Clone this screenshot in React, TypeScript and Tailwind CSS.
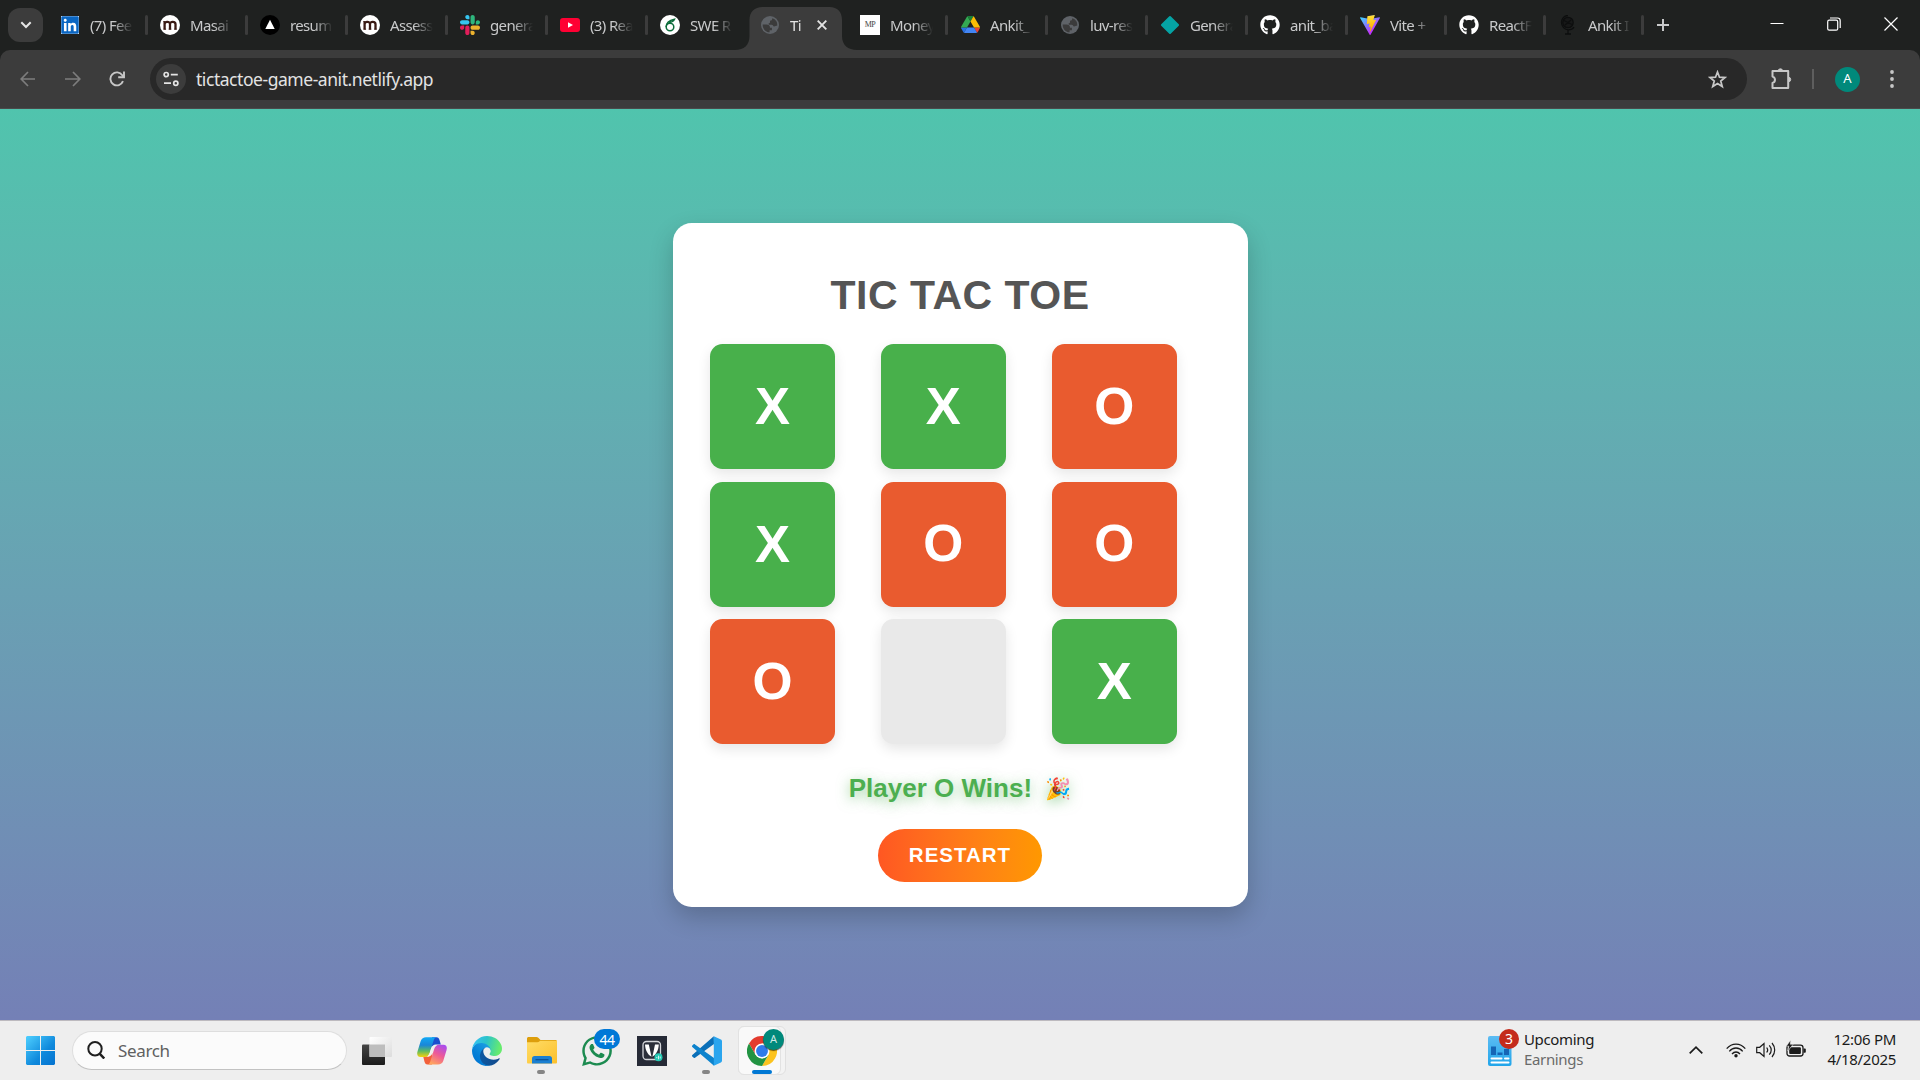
import React from "react";
import { FaGithub, FaLinkedin, FaWhatsapp } from "react-icons/fa";

const UI = "font-['Noto_Sans','Open_Sans',sans-serif]";

function Globe() {
  return (
    <svg viewBox="0 0 18 18" className="h-[18px] w-[18px]">
      <circle cx="9" cy="9" r="9" fill="#5f6368" />
      <path d="M1.700 8.600h3.600c2.400 0 3.700 1 3.700 3.200h1.900v2.500H8.600v2C4.800 16.300 1.700 13 1.700 9z" fill="#3b3b3b" />
      <path d="M11.300 2.300c0 1.700-.8 2.500-2.300 2.500v1.500c0 .6-.6 1-1.300 1v1.500h2.800c1.700 0 1.500 1.700 2.600 1.700 1.200 0 1.700-.7 2.700-.7h.4c.5-3.500-1.500-6.500-4.900-7.500z" fill="#3b3b3b" />
    </svg>
  );
}

function MasaiIcon() {
  return (
    <div className="flex h-5 w-5 items-center justify-center rounded-full bg-white">
      <svg viewBox="0 0 20 20" className="h-5 w-5" fill="none" stroke="#3a1a14" strokeWidth="2.300">
        <path d="M4.600 14.500V6.200M4.600 9C4.600 6.500 10 6 10 9v5.500M10 9c0-3 5.500-2.600 5.500.2v5.300" />
        <path d="M3.500 14.200h2.600M8.700 14.200h2.600M14.200 14.200h2.500M3.400 6.600h1.400" strokeWidth="1" />
      </svg>
    </div>
  );
}

function SlackIcon() {
  return (
    <svg viewBox="0 0 122.8 122.8" className="h-5 w-5">
      <path fill="#e01e5a" d="M25.8 77.6c0 7.1-5.8 12.9-12.9 12.9S0 84.7 0 77.6s5.8-12.9 12.9-12.9h12.9v12.9zm6.5 0c0-7.1 5.8-12.9 12.9-12.9s12.9 5.8 12.9 12.9v32.3c0 7.1-5.8 12.9-12.9 12.9s-12.9-5.8-12.9-12.9V77.6z" />
      <path fill="#36c5f0" d="M45.2 25.8c-7.1 0-12.9-5.8-12.9-12.9S38.1 0 45.2 0s12.9 5.8 12.9 12.9v12.9H45.2zm0 6.5c7.1 0 12.9 5.8 12.9 12.9s-5.8 12.900-12.900 12.900H12.900C5.800 58.100 0 52.300 0 45.200s5.800-12.900 12.900-12.900h32.300z" />
      <path fill="#2eb67d" d="M97 45.2c0-7.1 5.8-12.900 12.900-12.900s12.900 5.800 12.900 12.900-5.800 12.900-12.900 12.900H97V45.200zm-6.500 0c0 7.100-5.800 12.900-12.900 12.900s-12.900-5.800-12.900-12.900V12.900C64.700 5.800 70.500 0 77.600 0s12.900 5.800 12.900 12.900v32.300z" />
      <path fill="#ecb22e" d="M77.600 97c7.100 0 12.900 5.800 12.900 12.900s-5.800 12.900-12.900 12.900-12.900-5.800-12.900-12.900V97h12.900zm0-6.500c-7.100 0-12.900-5.800-12.900-12.900s5.800-12.900 12.900-12.900h32.300c7.100 0 12.900 5.800 12.900 12.900s-5.800 12.900-12.900 12.900H77.600z" />
    </svg>
  );
}

function DriveIcon() {
  return (
    <svg viewBox="0 0 87.3 78" className="mb-px h-[17px] w-[19px]">
      <path d="m6.6 66.85 3.85 6.65c.8 1.4 1.95 2.5 3.3 3.3l13.75-23.8h-27.5c0 1.55.4 3.1 1.2 4.5z" fill="#2671e6" />
      <path d="m43.65 25-13.75-23.8c-1.35.8-2.5 1.9-3.3 3.3l-25.4 44a9.06 9.06 0 0 0 -1.2 4.5h27.5z" fill="#34a853" />
      <path d="m73.55 76.8c1.35-.8 2.5-1.9 3.3-3.3l1.6-2.75 7.65-13.25c.8-1.4 1.2-2.95 1.2-4.5h-27.502l5.852 11.5z" fill="#ea4335" />
      <path d="m43.65 25 13.75-23.8c-1.35-.8-2.9-1.2-4.5-1.2h-18.5c-1.6 0-3.15.45-4.5 1.2z" fill="#188038" />
      <path d="m59.8 53h-32.3l-13.75 23.8c1.35.8 2.9 1.2 4.5 1.2h50.8c1.6 0 3.15-.45 4.5-1.2z" fill="#4285f4" />
      <path d="m73.4 26.5-12.7-22c-.8-1.4-1.95-2.5-3.3-3.3l-13.75 23.8 16.15 28h27.45c0-1.55-.4-3.1-1.2-4.5z" fill="#fbbc04" />
    </svg>
  );
}

function ViteIcon() {
  return (
    <svg viewBox="0 0 256 257" className="h-5 w-5">
      <defs>
        <linearGradient id="vite-a" x1="-.8%" x2="57.6%" y1="7.7%" y2="78.4%">
          <stop offset="0" stopColor="#41D1FF" />
          <stop offset="1" stopColor="#BD34FE" />
        </linearGradient>
        <linearGradient id="vite-b" x1="43.4%" x2="50.3%" y1="2.2%" y2="89%">
          <stop offset="0" stopColor="#FFEA83" />
          <stop offset=".08" stopColor="#FFDD35" />
          <stop offset="1" stopColor="#FFA800" />
        </linearGradient>
      </defs>
      <path fill="url(#vite-a)" d="M255.153 37.938L134.897 252.976c-2.483 4.44-8.862 4.466-11.382.048L.875 37.958c-2.746-4.814 1.371-10.646 6.827-9.67l120.385 21.517a6.537 6.537 0 0 0 2.322-.004l117.867-21.483c5.438-.991 9.574 4.796 6.877 9.62Z" />
      <path fill="url(#vite-b)" d="M185.432.063L96.44 17.501a3.268 3.268 0 0 0-2.634 3.014l-5.474 92.456a3.268 3.268 0 0 0 3.997 3.378l24.777-5.718c2.318-.535 4.413 1.507 3.936 3.838l-7.361 36.047c-.495 2.426 1.782 4.5 4.151 3.78l15.304-4.649c2.372-.72 4.652 1.36 4.15 3.788l-11.698 56.621c-.732 3.542 3.979 5.473 5.943 2.437l1.313-2.028l72.516-144.72c1.215-2.423-.88-5.186-3.54-4.672l-25.505 4.922c-2.396.462-4.435-1.77-3.759-4.114l16.646-57.705c.677-2.35-1.37-4.583-3.769-4.113Z" />
    </svg>
  );
}

function GlobeStand() {
  return (
    <svg viewBox="0 0 20 20" className="h-5 w-5" fill="none" stroke="#0d0e0e" strokeWidth="1.300">
      <circle cx="10" cy="7.500" r="5.200" fill="#171818" />
      <path d="M10 .5c-4 0-6.500 3.200-6.500 7s3 7.300 7 7.300c2.500 0 4.500-1 5.500-2.600M10 15v3.500M7 19h6M6 5.500l8 4M7 10l6-5" />
    </svg>
  );
}

type TabData = { label: string; icon: React.ReactNode; w: string };

const leftTabs: TabData[] = [
  {
    label: "(7) Fee",
    w: "w-[100px]",
    icon: (
      <div className="relative h-[18px] w-[18px] bg-white">
        <FaLinkedin className="absolute -left-px -top-px h-5 w-5 text-[#0a66c2]" />
      </div>
    ),
  },
  { label: "Masai", w: "w-[100px]", icon: <MasaiIcon /> },
  {
    label: "resum",
    w: "w-[100px]",
    icon: (
      <svg viewBox="0 0 20 20" className="h-5 w-5">
        <circle cx="10" cy="10" r="10" fill="#000" />
        <path d="M10 4.800L14.700 14H5.300z" fill="#fff" />
      </svg>
    ),
  },
  { label: "Assess", w: "w-[100px]", icon: <MasaiIcon /> },
  { label: "genera", w: "w-[100px]", icon: <SlackIcon /> },
  {
    label: "(3) Rea",
    w: "w-[100px]",
    icon: (
      <svg viewBox="0 0 20 14" className="h-[14px] w-5">
        <rect width="20" height="14" rx="3" fill="#ff0033" />
        <path d="M8 4.200v5.600L13 7z" fill="#fff" />
      </svg>
    ),
  },
  {
    label: "SWE R",
    w: "w-[100px]",
    icon: (
      <svg viewBox="0 0 20 20" className="h-5 w-5" fill="none" stroke="#0b6b3a" strokeWidth="1.500">
        <circle cx="10" cy="10" r="10" fill="#fff" stroke="none" />
        <circle cx="10" cy="12" r="3.800" />
        <path d="M6.200 12c0-4 2-6.500 8.300-7.800-1 2.300-3 3-5.500 3.300" />
      </svg>
    ),
  },
];

const rightTabs: TabData[] = [
  {
    label: "Money",
    w: "w-[100px]",
    icon: (
      <div className="flex h-5 w-5 items-center justify-center bg-white font-['Liberation_Serif',serif] text-[8px] tracking-[-0.5px] text-[#444]">
        MP
      </div>
    ),
  },
  { label: "Ankit_", w: "w-[100px]", icon: <DriveIcon /> },
  { label: "luv-res", w: "w-[100px]", icon: <Globe /> },
  {
    label: "Genera",
    w: "w-[100px]",
    icon: (
      <svg viewBox="0 0 20 20" className="h-5 w-5">
        <rect x="3.300" y="3.300" width="13.400" height="13.400" rx="1" fill="#05a3a4" transform="rotate(45 10 10)" />
      </svg>
    ),
  },
  { label: "anit_ba", w: "w-[100px]", icon: <FaGithub className="h-5 w-5 text-white" /> },
  { label: "Vite +", w: "w-[99px]", icon: <ViteIcon /> },
  { label: "ReactF", w: "w-[99px]", icon: <FaGithub className="h-5 w-5 text-white" /> },
  { label: "Ankit I", w: "w-[98px]", icon: <GlobeStand /> },
];

function Tab({ tab, last }: { tab: TabData; last?: boolean }) {
  return (
    <div className={`flex h-[50px] shrink-0 items-center ${tab.w}`}>
      <div className="ml-[10px] flex w-5 shrink-0 items-center justify-center">{tab.icon}</div>
      <div className="ml-[10px] h-6 w-[43px] whitespace-nowrap text-[15px] leading-6 tracking-[-0.65px] text-[#c9cacb] [mask-image:linear-gradient(to_right,#000_55%,transparent_100%)]">
        {tab.label}
      </div>
      {!last && <div className="ml-auto mr-[2px] h-5 w-[3px] rounded-full bg-[#3c3c3c]" />}
    </div>
  );
}

function TabStrip() {
  return (
    <div className="flex h-[50px] bg-[#1f2120]">
      <div className="flex w-[50px] shrink-0 items-center pl-2">
        <div className="flex h-[34px] w-[35px] items-center justify-center rounded-xl bg-[#3c3c3c]">
          <svg viewBox="0 0 12 8" className="h-2 w-3" fill="none" stroke="#e6e6e6" strokeWidth="2">
            <path d="M1.300 1.300L6 6l4.700-4.700" />
          </svg>
        </div>
      </div>
      {leftTabs.map((t, i) => (
        <Tab key={i} tab={t} last={i === leftTabs.length - 1} />
      ))}
      <div className="relative -ml-px flex w-[101px] shrink-0 items-end">
        <svg viewBox="0 0 122 43" className="absolute -left-[14px] bottom-0 h-[43px] w-[122px]">
          <path d="M0 43c9 0 14.500-5 14.500-14V13C14.500 5 19.500 0 27.500 0h67c8 0 12.500 5 12.500 13v16c0 9 6 14 15 14z" fill="#3c3c3c" />
        </svg>
        <div className="relative flex h-[50px] w-full items-center">
          <div className="ml-3">
            <Globe />
          </div>
          <div className="ml-[11px] h-6 w-[15px] whitespace-nowrap text-[15px] leading-6 tracking-[-0.5px] text-[#e3e3e3] [mask-image:linear-gradient(to_right,#000_60%,rgba(0,0,0,0.5)_100%)]">
            Ti
          </div>
          <svg viewBox="0 0 10 10" className="ml-3 h-[10px] w-[10px]" stroke="#e3e3e3" strokeWidth="1.900">
            <path d="M.7.7l8.600 8.600M9.300.7L.7 9.300" />
          </svg>
        </div>
      </div>
      {rightTabs.map((t, i) => (
        <Tab key={i} tab={t} />
      ))}
      <div className="flex w-[34px] items-center justify-center">
        <svg viewBox="0 0 14 14" className="h-3 w-3" stroke="#c9cacb" strokeWidth="2.300">
          <path d="M7 0v14M0 7h14" />
        </svg>
      </div>
      <div className="ml-auto flex h-12 items-center text-white">
        <svg viewBox="0 0 14 14" className="mr-[43px] h-[14px] w-[14px]" stroke="#fff" strokeWidth="1">
          <path d="M.5 6.500h13" />
        </svg>
        <svg viewBox="0 0 14 14" className="mr-[43px] h-[14px] w-[14px]" fill="none" stroke="#fff" strokeWidth="1.200">
          <rect x=".7" y="3.200" width="10" height="10" rx="1.500" />
          <path d="M3 1h7.500c1.500 0 2.700 1.200 2.700 2.700V11" />
        </svg>
        <svg viewBox="0 0 14 14" className="mr-[22px] h-[14px] w-[14px]" stroke="#fff" strokeWidth="1.200">
          <path d="M.5.500l13 13M13.500.5l-13 13" />
        </svg>
      </div>
    </div>
  );
}

function Toolbar() {
  return (
    <div className="bg-[#1f2120]">
      <div className="flex h-[59px] items-center rounded-t-[10px] border-b border-[#4a4a4a] bg-[#3c3c3c]">
        <svg viewBox="0 0 16 16" className="ml-5 h-4 w-4" fill="none" stroke="#7d7d7d" strokeWidth="1.700">
          <path d="M15 8H1.500M8 1L1.200 8 8 15" />
        </svg>
        <svg viewBox="0 0 16 16" className="ml-[29px] h-4 w-4" fill="none" stroke="#7d7d7d" strokeWidth="1.700">
          <path d="M0 8h14.500M8 1l6.800 7L8 15" />
        </svg>
        <svg viewBox="0 0 16 16" className="ml-[28px] h-4 w-4" fill="none" stroke="#c7c7c7" strokeWidth="1.900">
          <path d="M14 10.200A6.500 6.500 0 1 1 13.300 4.200L14.500 6" />
          <path d="M15 .5V6.300H9.200" />
        </svg>
        <div className="ml-[25px] flex h-[42px] w-[1597px] items-center rounded-full bg-[#282828] pl-[6px]">
          <div className="flex h-[30px] w-[30px] items-center justify-center rounded-full bg-[#3c3c3c]">
            <svg viewBox="0 0 16 16" className="h-4 w-4" fill="none" stroke="#e3e3e3" strokeWidth="1.700">
              <circle cx="3.200" cy="3.600" r="2.100" />
              <path d="M7.800 3.600h7M1 12.200h7" />
              <circle cx="12.800" cy="12.200" r="2.100" />
            </svg>
          </div>
          <div className="ml-[10px] text-[17.5px] tracking-[-0.45px] text-[#e3e3e3]">tictactoe-game-anit.netlify.app</div>
          <svg viewBox="0 0 24 24" className="ml-auto mr-5 h-[19px] w-[19px]" fill="none" stroke="#c7c7c7" strokeWidth="2.200">
            <path d="M12 2.600l2.500 6.500 7 .4-5.400 4.400 1.900 6.900L12 17l-6 3.800 1.900-6.900-5.400-4.400 7-.4z" />
          </svg>
        </div>
        <svg viewBox="0 0 21 23" className="mb-[2px] ml-6 h-[23px] w-[21px]" fill="none" stroke="#c7c7c7" strokeWidth="2" strokeLinejoin="round">
          <path d="M1.500 4h15.700v17H1.500v-5c3.300-1 3.300-5.400 0-6.400z" />
          <path d="M7.200 4a2.200 2.200 0 0 1 4.400 0zM17.500 10.300a2.200 2.200 0 0 1 0 4.400z" fill="#c7c7c7" strokeWidth="1" />
        </svg>
        <div className="ml-[20px] h-5 w-[2px] bg-[#5e5e5e]" />
        <div className="ml-[21px] flex h-[25px] w-[25px] items-center justify-center rounded-full bg-[#00897b] text-[13px] text-white">A</div>
        <svg viewBox="0 0 4 18" className="ml-[30px] h-[18px] w-1" fill="#c7c7c7">
          <circle cx="2" cy="2" r="1.900" />
          <circle cx="2" cy="9" r="1.900" />
          <circle cx="2" cy="16" r="1.900" />
        </svg>
      </div>
    </div>
  );
}

const board = ["X", "X", "O", "X", "O", "O", "O", "", "X"];

function Cell({ value }: { value: string }) {
  const tone =
    value === "X" ? "bg-[#48b04b] text-[52.5px]" : value === "O" ? "bg-[#e95b2f] text-[51.5px]" : "bg-[#e9e9e9]";
  return (
    <div
      className={`flex h-[125px] w-[125px] items-center justify-center rounded-[12.5px] font-bold leading-none text-white shadow-[0_5px_12.5px_rgba(0,0,0,0.1)] ${tone}`}
    >
      {value}
    </div>
  );
}

function Game() {
  return (
    <main className="flex h-[911px] justify-center bg-linear-to-b from-[#50c4ad] to-[#7480b6] pt-[114px] font-['Liberation_Sans',Arial,sans-serif]">
      <div className="flex h-[684px] w-[575px] flex-col items-center rounded-[18.75px] bg-white px-[37.5px] shadow-[0_10px_25px_rgba(0,0,0,0.2)]">
        <h1 className="mt-[49px] text-[41px] font-bold leading-[47px] tracking-[0.5px] text-[#555]">TIC TAC TOE</h1>
        <div className="mt-[25px] grid w-full grid-cols-3 gap-[12.5px]">
          {board.map((v, i) => (
            <Cell key={i} value={v} />
          ))}
        </div>
        <p className="mt-[29px] flex h-[30px] items-center text-[26px] font-bold leading-[30px] text-[#4caf50] [text-shadow:0_2.5px_12.5px_rgba(76,175,80,0.6)]">
          Player O Wins! <span className="ml-[13px] mt-[2px] font-['Noto_Color_Emoji'] text-[21px]">🎉</span>
        </p>
        <button className="mt-[26px] h-[53px] w-[164px] rounded-full bg-linear-to-r from-[#ff5722] to-[#ff9800] text-[20.5px] font-bold tracking-[1px] text-white">
          RESTART
        </button>
      </div>
    </main>
  );
}

function WindowsIcon() {
  return (
    <svg viewBox="0 0 29 29" className="h-[29px] w-[29px]">
      <defs>
        <linearGradient id="win" x1="0" y1="0" x2="29" y2="29" gradientUnits="userSpaceOnUse">
          <stop offset="0" stopColor="#4fd0ff" />
          <stop offset=".6" stopColor="#0f89dc" />
          <stop offset="1" stopColor="#0472cf" />
        </linearGradient>
      </defs>
      <path fill="url(#win)" d="M1 0h13v14H0V1zM15 0h13l1 1v13H15zM0 15h14v14H1l-1-1zM15 15h14v13l-1 1H15z" />
    </svg>
  );
}

function TaskViewIcon() {
  return (
    <svg viewBox="0 0 30 28" className="h-7 w-[30px]">
      <defs>
        <linearGradient id="tv" x1="0" y1="0" x2="1" y2="1">
          <stop offset="0" stopColor="#ffffff" />
          <stop offset="1" stopColor="#dcdcdc" />
        </linearGradient>
        <linearGradient id="tvd" x1="0" y1="0" x2="0" y2="1">
          <stop offset="0" stopColor="#444" />
          <stop offset="1" stopColor="#1c1c1c" />
        </linearGradient>
      </defs>
      <rect y="7.500" width="23" height="20.500" rx="1" fill="url(#tvd)" />
      <rect x="7.500" y="0" width="22.500" height="20" rx="1" fill="url(#tv)" />
      <rect x="7.500" y="7.500" width="15.500" height="12.500" fill="#bdbdbd" />
    </svg>
  );
}

function CopilotIcon() {
  return (
    <svg viewBox="0 0 30 28" className="h-7 w-[30px]">
      <defs>
        <linearGradient id="cp1" x1="0" y1="0" x2="0" y2="1">
          <stop offset="0" stopColor="#10a8f5" />
          <stop offset=".4" stopColor="#1a86d8" />
          <stop offset=".7" stopColor="#5dbb63" />
          <stop offset="1" stopColor="#f5d20c" />
        </linearGradient>
        <linearGradient id="cp2" x1=".8" y1="0" x2=".3" y2="1">
          <stop offset="0" stopColor="#a84cf0" />
          <stop offset=".5" stopColor="#ee5a96" />
          <stop offset="1" stopColor="#ffa45e" />
        </linearGradient>
      </defs>
      <path d="M15 .2h4.500c1.800 0 2.500 1.300 3 2.800l1.300 4.500h-5c-2.300 0-3.500 1.300-4.200 3.500z" fill="#1a4fcf" />
      <path d="M15 27.500h-4.500c-1.800 0-2.500-1.300-3-2.800L6.200 19.500h5c2.300 0 3.500-1.300 4.200-3.500z" fill="#f2603a" />
      <path d="M9 .2h10c-1.400.6-2 2-2.600 4l-3.600 11.500c-.9 2.700-2.400 4.300-5 4.300H3.500C.3 20-.3 17.300.5 14.500L3.700 4C4.500 1.500 6.500.2 9 .2z" fill="url(#cp1)" />
      <path d="M21 27.500H11c1.400-.6 2-2 2.600-4l3.600-11.500c.9-2.700 2.400-4.300 5-4.300h4.300c3.200 0 3.800 2.700 3 5.500l-3.200 10.500c-.8 2.500-2.800 3.800-5.300 3.800z" fill="url(#cp2)" />
      <path d="M17 8.500c-1.200 1-1.700 3-2.300 5-.7 2.300-1.200 4.600-2.700 6h-2c2-1 2.600-3.200 3.300-5.500.7-2.400 1.500-5 3.700-5.500z" fill="#f3f3f3" />
    </svg>
  );
}

function EdgeIcon() {
  return (
    <svg viewBox="0 0 256 256" className="h-[30px] w-[30px]">
      <defs>
        <linearGradient id="ed1" x1="58" y1="177" x2="236" y2="177" gradientUnits="userSpaceOnUse">
          <stop offset="0" stopColor="#0c59a4" />
          <stop offset="1" stopColor="#114a8b" />
        </linearGradient>
        <linearGradient id="ed2" x1="157" y1="99" x2="46" y2="221" gradientUnits="userSpaceOnUse">
          <stop offset="0" stopColor="#1b9de2" />
          <stop offset=".2" stopColor="#1595df" />
          <stop offset=".7" stopColor="#0680d7" />
          <stop offset="1" stopColor="#0078d4" />
        </linearGradient>
        <linearGradient id="ed3" x1="20" y1="50" x2="240" y2="110" gradientUnits="userSpaceOnUse">
          <stop offset="0" stopColor="#35c1f1" />
          <stop offset=".45" stopColor="#2cc3c9" />
          <stop offset="1" stopColor="#66eb6e" />
        </linearGradient>
      </defs>
      <g transform="translate(-4.63 -4.92)">
        <path fill="url(#ed1)" d="M235.68 195.46a93.73 93.73 0 0 1-10.54 4.71 101.87 101.87 0 0 1-35.9 6.46c-47.32 0-88.54-32.55-88.54-74.32A31.48 31.48 0 0 1 117.13 105c-42.8 1.8-53.8 46.4-53.8 72.53 0 73.88 68.09 81.37 82.76 81.37 7.91 0 19.84-2.3 27-4.56l1.31-.44a128.34 128.34 0 0 0 66.6-52.8 4 4 0 0 0-5.32-5.64Z" />
        <path fill="url(#ed2)" d="M110.34 246.34A79.2 79.2 0 0 1 87.6 225a80.72 80.72 0 0 1 29.53-120c3.12-1.47 8.45-4.13 15.54-4a32.35 32.35 0 0 1 25.69 13 31.88 31.88 0 0 1 6.36 18.66c0-.21 24.46-79.6-80-79.6-43.9 0-80 41.66-80 78.21a130.15 130.15 0 0 0 12.11 56 128 128 0 0 0 156.38 67.11 75.55 75.55 0 0 1-62.78-8Z" />
        <path fill="url(#ed3)" d="M156.94 153.78c-.81 1.05-3.3 2.5-3.3 5.66 0 2.61 1.7 5.12 4.72 7.23 14.38 10 41.49 8.68 41.56 8.68a59.56 59.56 0 0 0 30.27-8.35 61.38 61.38 0 0 0 30.43-52.88c.26-22.41-8-37.31-11.34-43.91C228.09 28.76 182.35 4.92 132.61 4.92a128 128 0 0 0-128 126.2c.48-36.54 36.8-66.05 80-66.05 3.5 0 23.46.34 42 10.07 16.34 8.58 24.9 18.94 30.85 29.21 6.18 10.67 7.28 24.15 7.28 29.52s-2.74 13.33-7.8 19.91Z" />
      </g>
    </svg>
  );
}

function ExplorerIcon() {
  return (
    <svg viewBox="0 0 30 27" className="h-[27px] w-[30px]">
      <defs>
        <linearGradient id="fx" x1="0" y1="0" x2="1" y2="1">
          <stop offset="0" stopColor="#ffdc66" />
          <stop offset="1" stopColor="#fcc02c" />
        </linearGradient>
      </defs>
      <path d="M0 1.500C0 .7.700 0 1.500 0h8c.8 0 1.300.3 1.800.8L13.500 3H28.500c.8 0 1.500.7 1.500 1.500V10H0z" fill="#dd9e0c" />
      <path d="M0 5.200h10.500c.8 0 1.300-.3 1.800-.7l.7-.7H30v21.400c0 .8-.4 1.300-1.300 1.300H1.300C.4 26.500 0 26 0 25.200z" fill="url(#fx)" />
      <path d="M5 26.500v-5c0-1.500 1-2.500 2.500-2.500h15c1.500 0 2.500 1 2.500 2.500v5z" fill="#1b7fd1" />
      <path d="M8.500 22.700h13" stroke="#0b4f94" strokeWidth="1.200" />
    </svg>
  );
}

function JioIcon() {
  return (
    <svg viewBox="0 0 30 30" className="h-[30px] w-[30px]">
      <rect width="30" height="30" fill="#262a36" />
      <rect x="6" y="5.500" width="17.500" height="18" rx="3.500" fill="#2b2f3a" stroke="#d4d6da" strokeWidth="1.300" />
      <path d="M8 8.500h3.800l2.700 12.300C10.500 18.500 8.300 14 8 8.500zM21.800 8.500H18l-2.600 12.300c4-2.300 6.100-6.800 6.400-12.300z" fill="#fff" />
      <circle cx="21.500" cy="21.200" r="4" fill="#25c9b4" />
      <path d="M19.800 21v1.200M21.500 19.700v3.600M23.200 20.500v2" stroke="#fff" strokeWidth=".8" />
    </svg>
  );
}

function VsCodeIcon() {
  return (
    <svg viewBox="0 0 30 30" className="h-[30px] w-[30px]">
      <path d="M22 8L3 21.700c-.5.400-1.100.3-1.600-.1L.3 20.500c-.4-.4-.4-1.100 0-1.500L21.800.2z" fill="#0a6fb8" />
      <path d="M22 22L3 8.400c-.5-.4-1.100-.4-1.600 0L.3 9.500c-.4.4-.4 1.100 0 1.500L22 29.800z" fill="#0d83cd" />
      <path d="M21.800.2l7.100 3.300c.7.300 1.100 1 1.100 1.700v19.600c0 .8-.4 1.400-1.100 1.700l-7.100 3.300z" fill="#2aa5ee" />
    </svg>
  );
}

function ChromeIcon() {
  return (
    <svg viewBox="0 0 48 48" className="h-[30px] w-[30px]">
      <path d="M3.200 12A24 24 0 0 1 44.800 12H24L13.600 30z" fill="#e33b2e" />
      <path d="M24 12h20.800A24 24 0 0 1 24 48l10.400-18z" fill="#fcc31e" />
      <path d="M3.200 12A24 24 0 0 0 24 48l10.400-18L24 36 13.600 30z" fill="#229342" />
      <circle cx="24" cy="24" r="12" fill="#fff" />
      <circle cx="24" cy="24" r="9.500" fill="#2f7bea" />
    </svg>
  );
}

function Slot({ children, mark }: { children: React.ReactNode; mark?: boolean }) {
  return (
    <div className="relative flex h-[59px] w-[55px] items-center justify-center">
      {children}
      {mark && <div className="absolute bottom-[6px] left-[23px] h-1 w-2 rounded-full bg-[#858585]" />}
    </div>
  );
}

function Taskbar() {
  return (
    <footer className="flex h-[60px] items-center border-t border-[#bdbabf] bg-[#eeeeee]">
      <div className="ml-[26px]">
        <WindowsIcon />
      </div>
      <div className="-mt-px ml-[17px] flex h-[39px] w-[275px] items-center rounded-full border border-[#dedede] border-b-[#c2c2c2] bg-[#fbfbfb] pl-[14px]">
        <svg viewBox="0 0 18 18" className="h-[18px] w-[18px]" fill="none" stroke="#1f1f1f" strokeWidth="2">
          <circle cx="8" cy="7.800" r="6.700" />
          <path d="M12.600 12.700L17.300 17.500" strokeWidth="2.500" />
        </svg>
        <span className="ml-[13px] mt-px text-[17px] tracking-[-0.35px] text-[#606060]">Search</span>
      </div>
      <div className="ml-[2px] flex">
        <Slot>
          <TaskViewIcon />
        </Slot>
        <Slot>
          <CopilotIcon />
        </Slot>
        <Slot>
          <EdgeIcon />
        </Slot>
        <Slot mark>
          <ExplorerIcon />
        </Slot>
        <Slot>
          <FaWhatsapp className="h-[34px] w-[34px] text-[#1c8b50]" />
          <div className="absolute left-[25px] top-[8px] flex h-5 w-[26px] items-center justify-center rounded-full bg-[#0078d7] text-[14px] tracking-[-0.5px] text-white">44</div>
        </Slot>
        <Slot>
          <JioIcon />
        </Slot>
        <Slot mark>
          <VsCodeIcon />
        </Slot>
        <div className="relative flex h-[59px] w-[55px] items-center justify-center">
          <div className="absolute left-[4px] top-[5px] h-[49px] w-[48px] rounded-md border border-[#e0e0e0] bg-[#f3f3f3]" />
          <div className="absolute left-[4px] top-[5px] h-[49px] w-[43px] rounded-md border border-[#e2e2e2] bg-[#f9f9f9]" />
          <div className="relative">
            <ChromeIcon />
          </div>
          <div className="absolute left-[29px] top-[8px] flex h-[21px] w-[21px] items-center justify-center rounded-full bg-[#00897b] text-[11px] text-[#cfe8e5] shadow-[0_1px_1px_rgba(0,0,0,0.6)]">A</div>
          <div className="absolute bottom-[6px] left-[18px] h-1 w-5 rounded-full bg-[#0078d4]" />
        </div>
      </div>

      <div className="ml-auto flex items-center">
        <div className="relative h-[30px] w-6">
          <svg viewBox="0 0 24 30" className="h-[30px] w-6">
            <defs>
              <linearGradient id="nw" x1="0" y1="0" x2="0" y2="1">
                <stop offset="0" stopColor="#5cbcf3" />
                <stop offset="1" stopColor="#21a5ea" />
              </linearGradient>
            </defs>
            <rect width="23.500" height="30" rx="2" fill="url(#nw)" />
            <path d="M3 10.500h5V19H3zM9.500 16.500h5V19h-5zM16 13h5v6h-5z" fill="#1565b5" />
            <path d="M3.500 22.500h10M3.500 26.500h17M17 22.500h3.500" stroke="#fff" strokeWidth="2" strokeLinecap="round" />
          </svg>
          <div className="absolute -top-[7px] left-[11px] flex h-5 w-5 items-center justify-center rounded-full bg-[#c42b1c] text-[14px] text-white">3</div>
        </div>
        <div className="-mt-1 ml-3 w-[80px] text-[15px] leading-5 tracking-[-0.35px]">
          <div className="text-[#1b1b1b]">Upcoming</div>
          <div className="text-[#6a6a6a]">Earnings</div>
        </div>
        <svg viewBox="0 0 14 8" className="-mt-px ml-[85px] h-2 w-[14px]" fill="none" stroke="#1b1b1b" strokeWidth="1.700">
          <path d="M.7 7.300L7 1.200l6.300 6.100" />
        </svg>
        <svg viewBox="0 0 20 15" className="-mt-px ml-[23px] h-[15px] w-5" fill="none" stroke="#1b1b1b" strokeWidth="1.300">
          <path d="M.7 5.600C5.800-.5 14.200-.5 19.300 5.600M3.300 8.300c3.700-4.400 9.700-4.400 13.400 0M6 11c2.300-2.700 5.700-2.700 8 0" />
          <circle cx="10" cy="12.800" r="1.700" fill="#1b1b1b" stroke="none" />
        </svg>
        <svg viewBox="0 0 20 16" className="-mt-px ml-[10px] h-4 w-5" fill="none" stroke="#1b1b1b" strokeWidth="1.200">
          <path d="M.7 5.300h3L8 1.500v13l-4.300-3.800h-3zM10.700 5.500c1.200 1.500 1.200 3.500 0 5M13.300 3.300c2.300 2.800 2.300 6.600 0 9.400M16 1c3.600 4.200 3.600 9.800 0 14" />
        </svg>
        <svg viewBox="0 0 20 17" className="-mt-1 ml-[10px] h-[17px] w-5">
          <rect x="1" y="5.200" width="16" height="10.800" rx="2.500" fill="none" stroke="#1b1b1b" strokeWidth="1.300" />
          <rect x="3.200" y="7.200" width="11.700" height="6.800" rx="1" fill="#1b1b1b" />
          <path d="M17.500 8.500h1.200c.7 0 1.100.5 1.100 1v2.200c0 .5-.4 1-1.100 1h-1.200z" fill="#1b1b1b" />
          <path d="M4.800 0L.2 6.200h2.600l-1 4.800L7.200 4.300H4.300z" fill="#1b1b1b" stroke="#eee" strokeWidth=".6" />
        </svg>
        <div className="-mt-1 mr-6 w-[90px] text-right text-[15px] leading-5 tracking-[-0.3px] text-[#1b1b1b]">
          <div>12:06 PM</div>
          <div>4/18/2025</div>
        </div>
      </div>
    </footer>
  );
}

export default function App() {
  return (
    <div className={`h-[1080px] w-[1920px] overflow-hidden ${UI}`}>
      <TabStrip />
      <Toolbar />
      <Game />
      <Taskbar />
    </div>
  );
}
